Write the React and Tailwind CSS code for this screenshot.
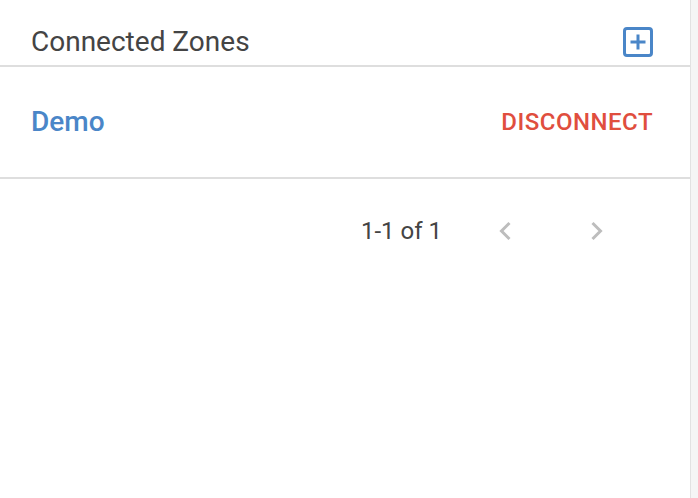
import React from 'react';

const zones = [{ name: 'Demo' }];

const PlusBox = () => (
    <svg width="30" height="30" viewBox="0 0 30 30" fill="none">
        <rect x="1.5" y="1.5" width="27" height="27" rx="2.5" stroke="#4a86c8" strokeWidth="3" />
        <path d="M15 7.5v15M7.5 15h15" stroke="#4a86c8" strokeWidth="3" />
    </svg>
);

const Chevron = ({ dir }) => (
    <svg width="14" height="20" viewBox="0 0 14 20" fill="none">
        <path
            d={dir === 'left' ? 'M11.5 2L3.5 10l8 8' : 'M2.5 2l8 8-8 8'}
            stroke="#bdbdbd"
            strokeWidth="3"
        />
    </svg>
);

const App = () => {
    return (
        <div className="w-[698px] h-[498px] flex bg-[#f5f5f5] font-['Roboto',sans-serif] overflow-hidden">
            <div className="w-[691px] h-full bg-white border-r border-[#e2e2e2] flex flex-col">
                <div className="h-[67px] shrink-0 pl-[31px] pr-[37px] pt-[19px] flex items-center justify-between border-b-2 border-[#dedede]">
                    <h2 className="text-[28px] leading-none text-[#444]">Connected Zones</h2>
                    <button className="flex"><PlusBox /></button>
                </div>

                {zones.map(zone => (
                    <div key={zone.name} className="h-[112px] shrink-0 pl-[31px] pr-[37px] flex items-center justify-between border-b-2 border-[#dedede]">
                        <span className="text-[28px] leading-none font-medium text-[#4a86c8]">{zone.name}</span>
                        <button className="text-[24px] leading-none font-medium text-[#e04e3e] tracking-[0.5px]">DISCONNECT</button>
                    </div>
                ))}

                <div className="h-[104px] shrink-0 flex items-center justify-end pr-[86px]">
                    <span className="text-[24px] leading-none text-[#444] mr-[56px]">1-1 of 1</span>
                    <button className="flex mr-[78px]"><Chevron dir="left" /></button>
                    <button className="flex"><Chevron dir="right" /></button>
                </div>
            </div>
        </div>
    );
};

export default App;
